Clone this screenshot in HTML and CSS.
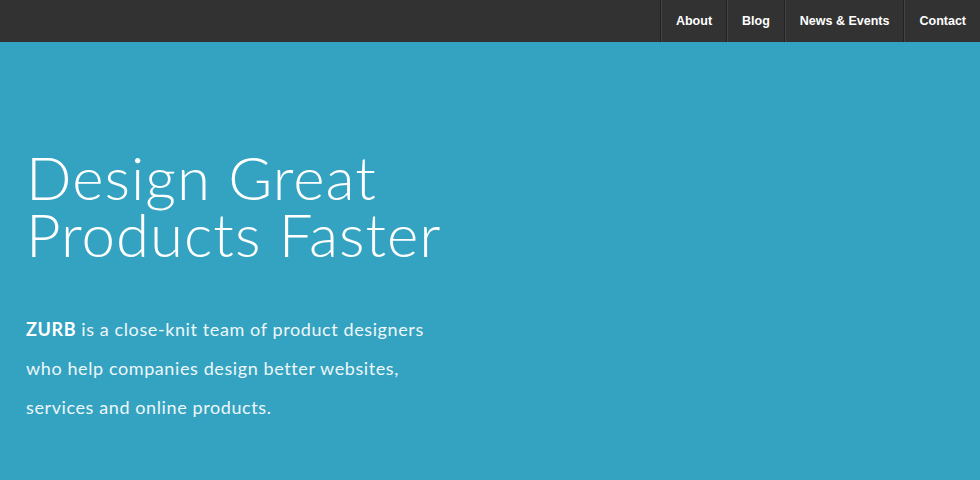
FILE: index.html
```html
<!DOCTYPE html>
<html>
<head>
<meta charset="utf-8">
<link rel="stylesheet" href="styles.css">
</head>
<body>
<header class="topbar">
  <nav class="nav">
    <a class="nav-item" href="#">About</a>
    <a class="nav-item" href="#">Blog</a>
    <a class="nav-item" href="#">News &amp; Events</a>
    <a class="nav-item" href="#">Contact</a>
  </nav>
</header>
<main class="hero">
  <h1 class="title">Design Great<br>Products Faster</h1>
  <p class="lead"><strong>ZURB</strong> is a close-knit team of product designers<br>who help companies design better websites,<br>services and online products.</p>
</main>
</body>
</html>
```
FILE: styles.css
```css
html, body {
  margin: 0;
  padding: 0;
  height: 100%;
  background: #34a3c1;
}
.topbar {
  height: 42px;
  background: #333233;
  display: flex;
  justify-content: flex-end;
}
.nav {
  display: flex;
  height: 100%;
}
.nav-item {
  display: flex;
  align-items: center;
  padding: 0 14px 0 15px;
  color: #fff;
  text-decoration: none;
  font-family: "Liberation Sans", Arial, sans-serif;
  font-weight: bold;
  font-size: 12.5px;
  border-left: 1px solid #232223;
  box-shadow: inset 1px 0 0 #454445;
}
.hero {
  padding: 107px 0 0 26px;
  color: #fff;
}
.title {
  margin: 0;
  font-family: "Lato", sans-serif;
  font-weight: 300;
  font-size: 60px;
  line-height: 57px;
  letter-spacing: 1px;
}
.lead {
  margin: 47px 0 0 0;
  font-family: "Lato", sans-serif;
  font-size: 18px;
  line-height: 39px;
  letter-spacing: 0.6px;
  color: #eef7fa;
}
.lead strong {
  font-weight: 700;
  color: #fff;
}
```
